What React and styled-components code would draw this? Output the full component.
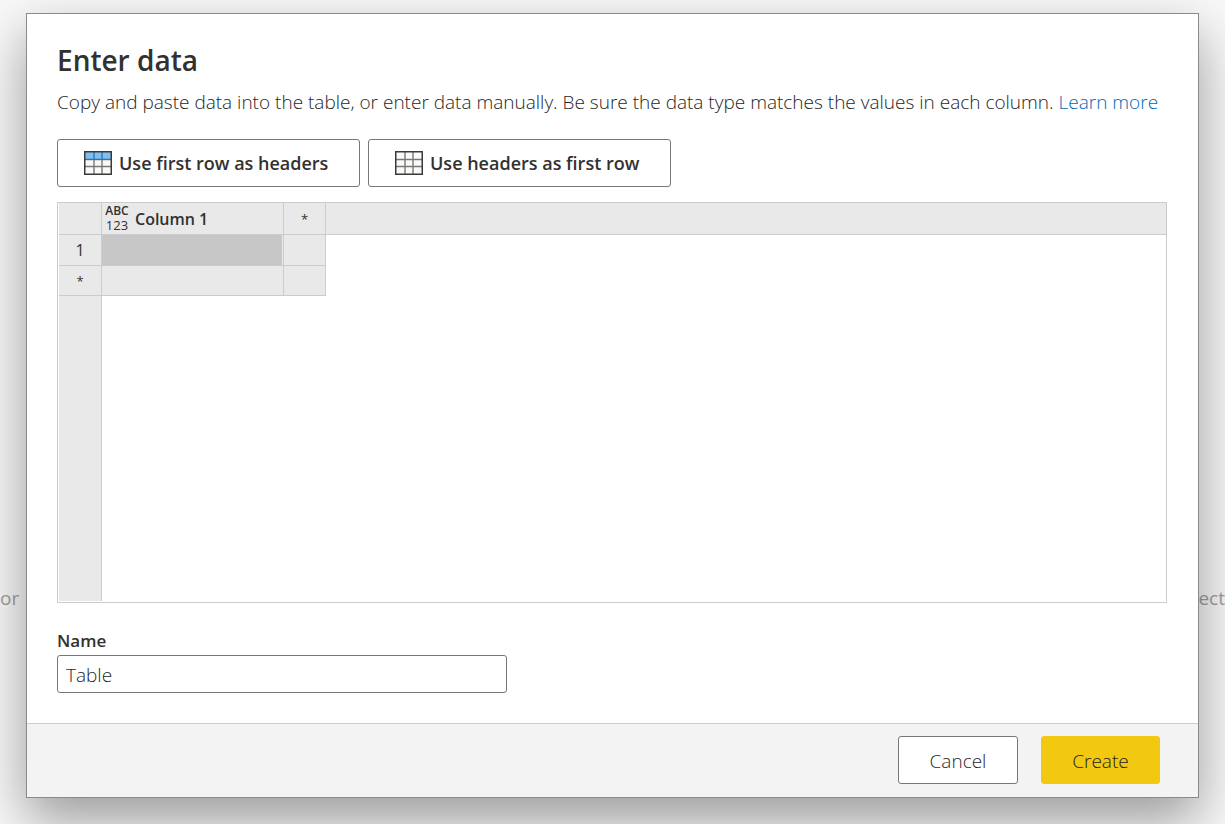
import React, { useState } from 'react'
import styled, { createGlobalStyle } from 'styled-components'

const GlobalStyle = createGlobalStyle`
* {
  box-sizing: border-box;
}

body {
  margin: 0;
  background: #f8f8f8;
}

body, button, input {
  font-family: 'Open Sans', 'Noto Sans', sans-serif;
  color: #323130;
}
`

const Page = styled.div`
  position: relative;
  display: flex;
  min-height: 100vh;
  padding: 13px 26px 26px;
  overflow: hidden;
`

const Backdrop = styled.div`
  position: absolute;
  inset: 0;
  display: flex;
  justify-content: space-between;
  padding-top: 584px;
  font-size: 19px;
  line-height: 28px;
  color: #a0a0a0;
`

const Dialog = styled.section`
  position: relative;
  flex: 1;
  min-width: 0;
  display: flex;
  flex-direction: column;
  background: #ffffff;
  border: 1px solid #8a8a8a;
  box-shadow: 0 22px 50px rgba(0, 0, 0, 0.38);
`

const Content = styled.div`
  flex: 1;
  display: flex;
  flex-direction: column;
  padding: 28px 31px 30px 30px;
`

const Title = styled.h1`
  margin: 0;
  font-size: 28px;
  font-weight: 600;
  line-height: 36px;
`

const Description = styled.p`
  margin: 10px 0 0;
  font-size: 19px;
  font-weight: 330;
  line-height: 28px;
  color: #1f1f1f;
`

const Link = styled.a`
  color: #0068b8;
  text-decoration: none;
`

const Toolbar = styled.div`
  display: flex;
  gap: 8px;
  margin-top: 23px;
`

const ToolButton = styled.button`
  display: flex;
  align-items: center;
  gap: 7px;
  width: 303px;
  height: 48px;
  padding: 0 0 0 26px;
  background: #ffffff;
  border: 1px solid #777777;
  border-radius: 3px;
  font-size: 18px;
  font-weight: 600;
`

const Sheet = styled.div`
  flex: 1;
  display: flex;
  flex-direction: column;
  margin-top: 15px;
  padding: 0 0 1px 1px;
  border: 1px solid #cccccc;
`

const Grid = styled.table`
  width: 100%;
  table-layout: fixed;
  border-collapse: separate;
  border-spacing: 0;
`

const Col = styled.col`
  width: ${props => props.$width};
`

const Row = styled.tr`
  height: ${props => props.$height};
`

const HeadCell = styled.th`
  padding: 0;
  background: #e9e9e9;
  border-right: 1px solid #cccccc;
  border-bottom: 1px solid #cccccc;
  font-size: ${props => (props.$small ? '13px' : '16px')};
  font-weight: 400;
  line-height: 20px;
`

const HeadFiller = styled.td`
  padding: 0;
  background: #e9e9e9;
  border-bottom: 1px solid #cccccc;
`

const Cell = styled.td`
  padding: 0;
  background: #e9e9e9;
  border-right: 1px solid #cccccc;
  border-bottom: 1px solid #cccccc;
`

const CellInput = styled.input`
  display: block;
  width: calc(100% - 1px);
  height: 30px;
  padding: 0 4px;
  background: #c7c7c7;
  border: none;
  outline: none;
  font-size: 16px;
`

const ColumnTitle = styled.div`
  display: flex;
  align-items: center;
  gap: 6px;
  padding-left: 3px;
  font-weight: 550;
`

const TypeIcon = styled.span`
  display: flex;
  flex-direction: column;
  width: 24px;
  padding-bottom: 2px;
  font-size: 12px;
  font-weight: 600;
  line-height: 14px;
`

const Digits = styled.span`
  font-size: 13px;
  font-weight: 400;
`

const RowGutter = styled.div`
  flex: 1;
  width: 43px;
  background: #e9e9e9;
  border-right: 1px solid #cccccc;
`

const Label = styled.label`
  margin-top: 26px;
  font-size: 17px;
  font-weight: 600;
  line-height: 24px;
`

const NameInput = styled.input`
  width: 450px;
  height: 38px;
  margin-top: 2px;
  padding: 2px 8px 0;
  background: #ffffff;
  border: 1px solid #777777;
  border-radius: 3px;
  font-size: 19px;
  font-weight: 330;
  color: #1f1f1f;
`

const Footer = styled.footer`
  display: flex;
  justify-content: flex-end;
  gap: 23px;
  padding: 12px 38px 13px;
  background: #f3f3f3;
  border-top: 1px solid #cccccc;
`

const Button = styled.button`
  width: ${props => (props.$primary ? '119px' : '120px')};
  height: 48px;
  padding: 2px 0 0;
  background: ${props => (props.$primary ? '#f2c811' : '#ffffff')};
  border: 1px solid ${props => (props.$primary ? '#f2c811' : '#777777')};
  border-radius: 3px;
  font-size: 19px;
  font-weight: 330;
  color: #1f1f1f;
`

function TableIcon({ filled }) {
  return (
    <svg width="28" height="24" viewBox="0 0 28 24" aria-hidden="true">
      <rect x="0.5" y="0.5" width="27" height="23" fill="#fafafa" />
      <path d="M10 1V23M18 1V23M1 8.5H27M1 15.5H27" fill="none" stroke="#797774" strokeWidth="1.4" />
      {filled && (
        <>
          <rect x="1" y="1" width="26" height="7" fill="#83beec" />
          <path d="M10 1V8M18 1V8M1 8.4H27" fill="none" stroke="#1e78c8" strokeWidth="1.3" />
        </>
      )}
      <rect x="0.75" y="0.75" width="26.5" height="22.5" fill="none" stroke="#3a3a38" strokeWidth="1.5" />
    </svg>
  )
}

function DataSheet() {
  return (
    <Sheet>
      <Grid>
        <colgroup>
          <Col $width="43px" />
          <Col $width="182px" />
          <Col $width="42px" />
          <Col />
        </colgroup>
        <thead>
          <Row $height="32px">
            <HeadCell />
            <HeadCell scope="col">
              <ColumnTitle>
                <TypeIcon>
                  ABC
                  <Digits>123</Digits>
                </TypeIcon>
                Column 1
              </ColumnTitle>
            </HeadCell>
            <HeadCell scope="col" $small>*</HeadCell>
            <HeadFiller />
          </Row>
        </thead>
        <tbody>
          <Row $height="31px">
            <HeadCell scope="row">1</HeadCell>
            <Cell>
              <CellInput aria-label="Column 1, row 1" />
            </Cell>
            <Cell />
          </Row>
          <Row $height="30px">
            <HeadCell scope="row" $small>*</HeadCell>
            <Cell />
            <Cell />
          </Row>
        </tbody>
      </Grid>
      <RowGutter />
    </Sheet>
  )
}

function App() {
  const [name, setName] = useState('Table')

  return (
    <>
      <GlobalStyle />
      <Page>
        <Backdrop aria-hidden="true">
          <span>or</span>
          <span>ect</span>
        </Backdrop>
        <Dialog role="dialog" aria-labelledby="dialog-title">
          <Content>
            <Title id="dialog-title">Enter data</Title>
            <Description>
              Copy and paste data into the table, or enter data manually. Be sure the data type matches the values in each column.{' '}
              <Link href="#learn-more">Learn more</Link>
            </Description>
            <Toolbar>
              <ToolButton type="button">
                <TableIcon filled />
                Use first row as headers
              </ToolButton>
              <ToolButton type="button">
                <TableIcon />
                Use headers as first row
              </ToolButton>
            </Toolbar>
            <DataSheet />
            <Label htmlFor="table-name">Name</Label>
            <NameInput
              id="table-name"
              value={name}
              onChange={e => setName(e.target.value)}
            />
          </Content>
          <Footer>
            <Button type="button">Cancel</Button>
            <Button type="button" $primary>Create</Button>
          </Footer>
        </Dialog>
      </Page>
    </>
  )
}

export default App
